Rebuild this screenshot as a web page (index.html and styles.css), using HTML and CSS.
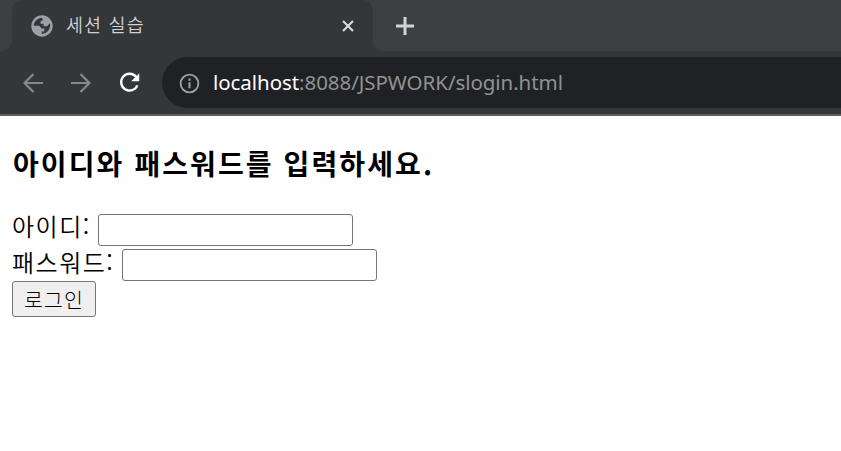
FILE: index.html
```html
<!DOCTYPE html>
<html lang="ko">
<head>
<meta charset="utf-8">
<title>세션 실습</title>
<link rel="stylesheet" href="styles.css">
</head>
<body>
<header class="browser">
  <div class="tabstrip">
    <div class="strip-left"></div>
    <div class="tab">
      <svg class="globe" viewBox="0 0 22 22"><circle cx="11" cy="11" r="10.7" fill="#9aa0a6"/><path d="M2.7 10.8C3 6.8 6 3.4 10.8 2.8L12 5 9.5 6.4v2.4h3.1v2.5h3.2c1.6 0 1.5-2.7 3.3-2.7.6 5.5-3 10.1-8.3 10.4v-2.4h2.5v-3.1h-2.6l-2.6-2.7z" fill="#35363a"/></svg>
      <span class="tab-title">세션 실습</span>
      <svg class="close" viewBox="0 0 12 12"><path d="M1 1l10 10M11 1L1 11" stroke="#dadce0" stroke-width="2.1"/></svg>
    </div>
    <div class="strip-right">
      <svg class="plus" viewBox="0 0 18 18"><path d="M9 0v18M0 9h18" stroke="#d2d3d4" stroke-width="3"/></svg>
    </div>
  </div>
  <div class="toolbar">
    <svg class="nav" viewBox="0 0 20 20"><path d="M20 10H1.5M10.5 1L1.5 10l9 9" fill="none" stroke="#87888b" stroke-width="2.2"/></svg>
    <svg class="nav" viewBox="0 0 20 20"><path d="M0 10h18.5M9.5 1l9 9-9 9" fill="none" stroke="#87888b" stroke-width="2.2"/></svg>
    <svg class="reload" viewBox="0 0 22 22"><path d="M18 5.2A8.8 8.8 0 1 0 19.2 14" fill="none" stroke="#fff" stroke-width="2.4"/><path d="M21.2 1.2v8.4h-8.4z" fill="#fff"/></svg>
    <div class="address">
      <svg class="info" viewBox="0 0 22 22"><circle cx="11" cy="11" r="9.3" fill="none" stroke="#9aa0a6" stroke-width="2"/><path d="M11 5.8v2.3M11 9.8v6.3" stroke="#9aa0a6" stroke-width="2.2"/></svg>
      <span class="url"><span class="host">localhost</span>:8088/JSPWORK/slogin.html</span>
    </div>
  </div>
</header>
<main class="page">
  <h3 class="heading">아이디와 패스워드를 입력하세요.</h3>
  <form>
    <label class="row first"><span class="label">아이디:</span><input class="field" type="text"></label>
    <label class="row second"><span class="label">패스워드:</span><input class="field" type="password"></label>
    <button class="login" type="button">로그인</button>
  </form>
</main>
</body>
</html>
```
FILE: styles.css
```css
* { box-sizing: border-box; }
body { margin: 0; background: #fff; color: #000; font-family: "Noto Sans CJK KR", sans-serif; overflow: hidden; }
svg { display: block; flex: none; }
.browser { height: 116px; background: #35363a; border-bottom: 2px solid #5f5d60; }
.tabstrip { display: flex; height: 51px; background: linear-gradient(#3c4043 12px, #35363a 12px); }
.strip-left { flex: none; width: 12px; background: #3c4043; border-bottom-right-radius: 10px; }
.tab { display: flex; align-items: center; width: 361px; padding: 0 19px; background: #35363a; border-radius: 10px 10px 0 0; }
.globe { width: 22px; height: 22px; }
.tab-title { flex: 1; margin-left: 13px; padding-bottom: 4px; font-size: 18.5px; font-weight: 350; line-height: 26px; letter-spacing: 1.1px; color: #cfd1d4; }
.close { width: 12px; height: 12px; }
.strip-right { flex: 1; padding: 17px 0 0 23px; background: #3c4043; border-bottom-left-radius: 10px; }
.plus { width: 18px; height: 18px; }
.toolbar { display: flex; align-items: center; height: 63px; padding-left: 23px; }
.nav { width: 20px; height: 20px; margin-right: 28px; }
.reload { width: 21px; height: 21px; margin-right: 22px; }
.address { display: flex; flex: 1; align-items: center; height: 51px; padding-left: 17px; background: #202124; border-radius: 26px 0 0 26px; }
.info { width: 21px; height: 21px; margin-top: 1px; }
.url { margin-left: 13px; padding-bottom: 2px; font: 20.5px/28px "Noto Sans", sans-serif; letter-spacing: -.06px; color: #919293; white-space: nowrap; }
.host { color: #fff; }
.page { padding: 29px 12px 0; }
.heading { margin: 0 0 0 1px; font-size: 28px; line-height: 36px; font-weight: 700; letter-spacing: 2.1px; white-space: nowrap; }
form { padding-top: 33px; }
.row { display: flex; align-items: center; height: 32px; }
.second { margin-top: 3px; }
.label { flex: none; width: 110px; padding-bottom: 7px; font-size: 24px; font-weight: 350; line-height: 32px; letter-spacing: 1.5px; white-space: nowrap; }
.first .label { width: 86px; padding-bottom: 8px; }
.field { width: 255px; height: 32px; border: 1px solid #767676; border-radius: 3px; background: #fff; }
.login { display: block; width: 84px; height: 36px; padding: 0; border: 1px solid #767676; border-radius: 3px; background: #efefef; color: #000; font: 300 20.5px/30px "Noto Sans CJK KR", sans-serif; letter-spacing: 1.2px; }
```
